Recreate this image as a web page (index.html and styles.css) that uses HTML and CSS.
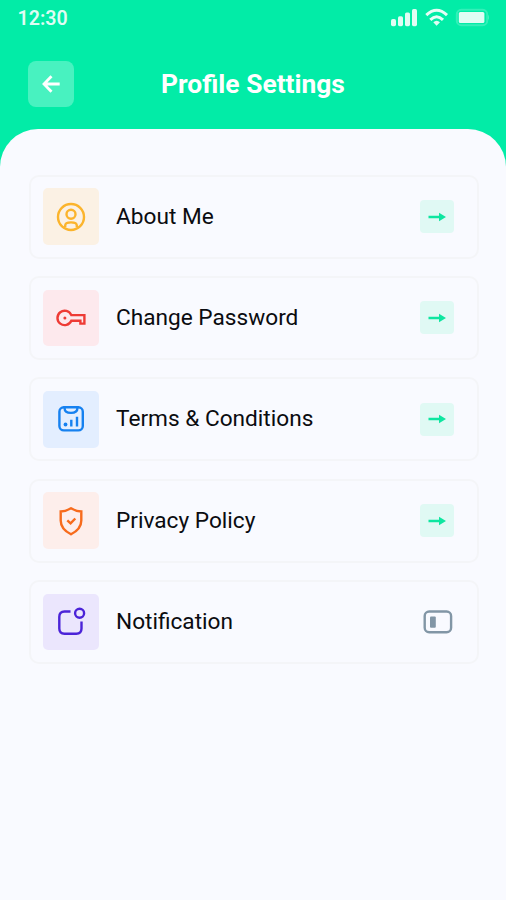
FILE: index.html
```html
<!DOCTYPE html>
<html lang="en">
<head>
<meta charset="utf-8">
<title>Profile Settings</title>
<link rel="stylesheet" href="styles.css">
</head>
<body>
<div class="status">
  <span class="time">12:30</span>
  <svg class="indicators" width="98" height="20" viewBox="0 0 98 20" fill="#fff" fill-opacity=".88">
    <rect x="0" y="11" width="5" height="7.2" rx="1.8"/><rect x="7" y="8.2" width="5" height="10" rx="1.6"/><rect x="14" y="4.6" width="5" height="13.6" rx="1.6"/><rect x="21" y="1" width="5" height="17.2" rx="1.6"/>
    <g fill="none" stroke="#fff" stroke-opacity=".9" stroke-width="3"><path d="M35.3 7.1Q45.6-2.6 56 7.1"/><path d="M39.3 11.9Q45.6 5.6 52 11.9"/></g>
    <path d="M42.3 14.3Q45.6 11.3 49 14.3L45.6 17.8Z"/>
    <rect x="65.8" y="1.8" width="30.4" height="15.4" rx="4.5" fill="none" stroke="#fff" stroke-opacity=".2" stroke-width="2"/>
    <rect x="67.8" y="4" width="25.6" height="11" rx="1.5"/><path d="M97.3 6.8Q99 9.3 97.3 12Z" fill-opacity=".35"/>
  </svg>
</div>
<header class="header">
  <button class="back" aria-label="Back"><svg width="20" height="20" viewBox="0 0 20 20" fill="none" stroke="#fff" stroke-width="2.8"><path d="M18.700 10H3M10.500 2.300L3 10l7.500 7.700"/></svg></button>
  <h1 class="title">Profile Settings</h1>
</header>
<main class="sheet">
  <a class="card">
    <span class="tile amber"><svg width="32" height="32" viewBox="0 0 32 32"><circle cx="16" cy="16" r="13"/><circle cx="16" cy="13.2" r="4.5"/><path d="M10.2 26.3v-1.8c0-2.1 2.5-3.1 5.8-3.1s5.8 1 5.8 3.1v1.800"/></svg></span>
    <span class="label">About Me</span>
    <span class="go"><svg width="18" height="10" viewBox="0 0 18 10"><path d="M.5 3.800h10.500V.8L18 5l-7 4.200V6.200H.5z"/></svg></span>
  </a>
  <a class="card">
    <span class="tile red"><svg width="32" height="32" viewBox="0 0 32 32"><path d="M16.300 13.100H29.400V21.600H25.400V18.700H16.300A7.200 7.200 0 1 1 16.300 13.100Z"/><circle cx="9.900" cy="15.900" r="1.500" class="dot"/></svg></span>
    <span class="label">Change Password</span>
    <span class="go"><svg width="18" height="10" viewBox="0 0 18 10"><path d="M.5 3.800h10.500V.8L18 5l-7 4.200V6.200H.5z"/></svg></span>
  </a>
  <a class="card">
    <span class="tile blue"><svg width="32" height="32" viewBox="0 0 32 32"><rect x="4.400" y="4.200" width="23.400" height="23.200" rx="4.500"/><path d="M9.600 3v2.300c0 3.300 2 4.600 6.400 4.600s6.400-1.300 6.400-4.600V3M16.300 16.800v6.700M22 13.800v9.700"/><circle cx="10.500" cy="21.500" r="1.900" class="dot"/></svg></span>
    <span class="label">Terms &amp; Conditions</span>
    <span class="go"><svg width="18" height="10" viewBox="0 0 18 10"><path d="M.5 3.800h10.500V.8L18 5l-7 4.200V6.200H.5z"/></svg></span>
  </a>
  <a class="card">
    <span class="tile orange"><svg width="32" height="32" viewBox="0 0 32 32"><path d="M16 3.300Q11 6.400 5.700 6.500V15.500C5.700 21.500 9.500 26 16 29.300C22.500 26 26.300 21.500 26.300 15.500V6.500Q21 6.400 16 3.300Z"/><path d="M12.300 15.300l3.300 3.100 4.700-4.900"/></svg></span>
    <span class="label">Privacy Policy</span>
    <span class="go"><svg width="18" height="10" viewBox="0 0 18 10"><path d="M.5 3.800h10.500V.8L18 5l-7 4.200V6.200H.5z"/></svg></span>
  </a>
  <a class="card">
    <span class="tile violet"><svg width="32" height="32" viewBox="0 0 32 32"><path d="M15.500 5.500H9.500Q4.300 5.500 4.300 10.700V22.500Q4.300 27.700 9.500 27.700H21.300Q26.500 27.700 26.500 22.500V15.500"/><circle cx="24.600" cy="7.300" r="4.500"/></svg></span>
    <span class="label">Notification</span>
    <svg class="toggle" width="30" height="24" viewBox="0 0 30 24"><rect x="1.700" y="1.500" width="26.400" height="20.800" rx="4.500"/><rect x="7" y="6.500" width="5.800" height="11.200" rx="1" class="knob"/></svg>
  </a>
</main>
</body>
</html>
```

FILE: styles.css
```css
* { box-sizing: border-box; }
body {
  margin: 0;
  min-height: 900px;
  display: flex;
  flex-direction: column;
  background: #02eca7;
  font-family: Roboto, sans-serif;
}
.status {
  display: flex;
  justify-content: space-between;
  align-items: center;
  height: 36px;
  padding: 0 17px 0 17.500px;
}
.time { color: rgba(255, 255, 255, .88); font-size: 19.600px; font-weight: 600; }
.header {
  display: grid;
  grid-template-columns: 46px 1fr 46px;
  align-items: center;
  height: 93px;
  padding: 2px 28px 0;
}
.back {
  display: flex;
  align-items: center;
  justify-content: center;
  width: 46px;
  height: 46px;
  padding: 0;
  border: 0;
  border-radius: 8px;
  background: #48f2c0;
}
.title {
  margin: 0;
  color: #fff;
  font-size: 26.400px;
  font-weight: 700;
  text-align: center;
}
.sheet {
  flex: 1;
  display: flex;
  flex-direction: column;
  gap: 17.400px;
  padding: 45.500px 27px 0 29px;
  border-radius: 38px 38px 0 0;
  background: #f9faff;
}
.card {
  display: flex;
  align-items: center;
  height: 84px;
  padding: 0 23px 0 11.500px;
  border: 2px solid #f4f5f8;
  border-radius: 10px;
}
.tile {
  display: flex;
  align-items: center;
  justify-content: center;
  width: 56.500px;
  height: 56.500px;
  border-radius: 5px;
}
.tile svg { fill: none; stroke: currentColor; stroke-width: 2.400; }
.tile .dot { fill: currentColor; stroke: none; }
.amber { background: #fbf1e4; color: #fbb42c; }
.red { background: #fde9ed; color: #ee3b35; }
.blue { background: #e3eeff; color: #1681f0; }
.orange { background: #fdeeeb; color: #f76b1c; }
.violet { background: #ebe6fd; color: #4b23d8; }
.label {
  flex: 1;
  margin-left: 17px;
  padding-bottom: 1px;
  color: #0b0c10;
  font-size: 22.650px;
  font-weight: 450;
}
.go {
  display: flex;
  align-items: center;
  justify-content: center;
  width: 34px;
  height: 33px;
  border-radius: 4px;
  background: #e0f9f4;
}
.go svg { fill: #0ee6a0; }
.toggle { margin-right: 1.500px; fill: none; stroke: #8296a6; stroke-width: 2.400; }
.toggle .knob { fill: #8296a6; stroke: none; }
```
